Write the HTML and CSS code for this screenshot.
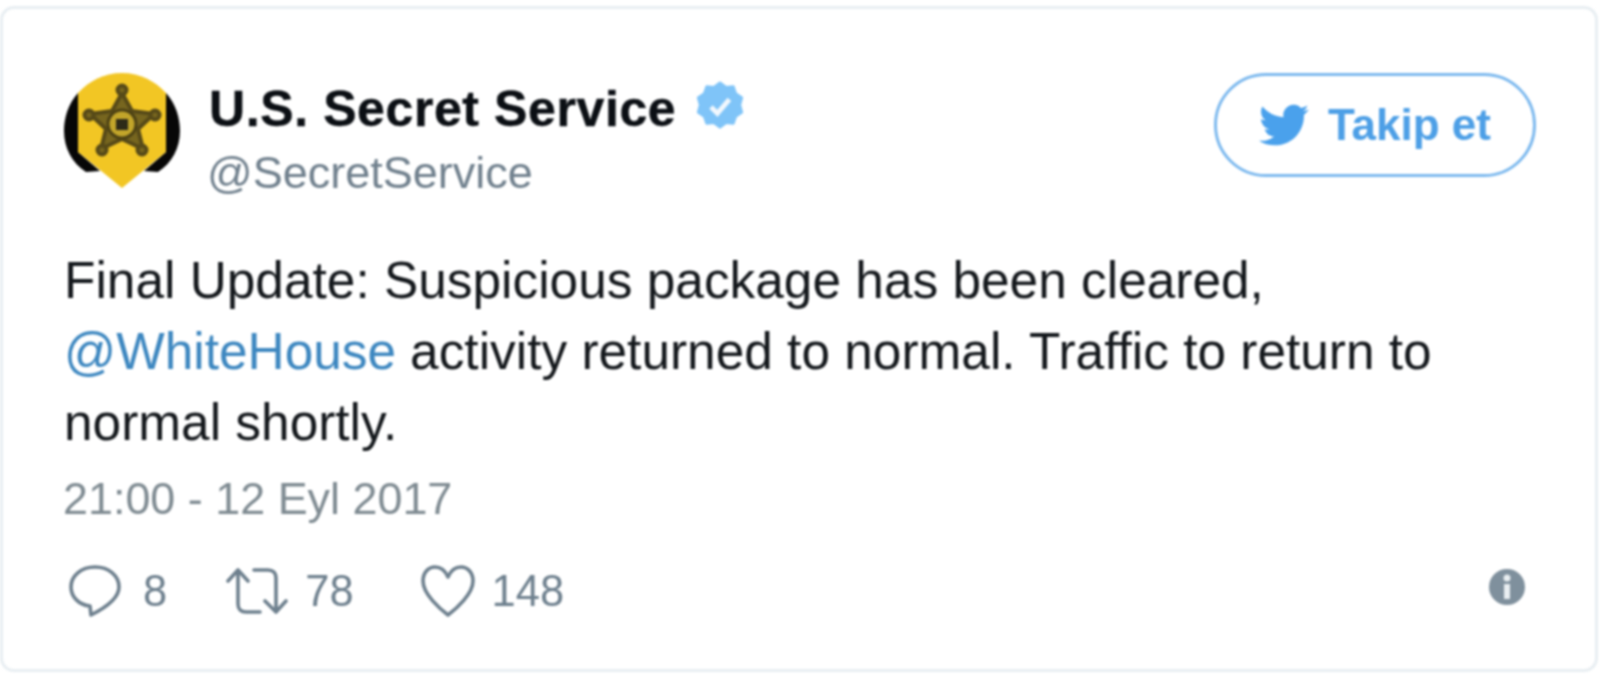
FILE: index.html
```html
<!DOCTYPE html>
<html lang="tr">
<head>
<meta charset="utf-8">
<title>U.S. Secret Service</title>
<link rel="stylesheet" href="styles.css">
</head>
<body>
<article class="card">
  <header class="head">
    <svg class="avatar" viewBox="0 0 116 116" aria-hidden="true">
      <path d="M14 20C4 31 0 45 0 58c0 17 8 32 22 41l14-1L14 79Z" fill="#070707"/>
      <path d="M102 20c10 11 14 25 14 38 0 17-8 32-22 41l-14-1 22-19Z" fill="#070707"/>
      <path d="M58 0C40 0 25 8 14 20V79L58 115L102 79V20C91 8 76 0 58 0Z" fill="#f2c624"/>
      <g fill="#77661f" stroke="#574a18" stroke-width="4" stroke-linejoin="round">
        <path d="M58 20L68 38L90 41L74 56L79 76L58 66L37 76L42 56L26 41L48 38Z"/>
        <circle cx="58" cy="17" r="4.500"/><circle cx="91" cy="42" r="4.500"/><circle cx="78" cy="77" r="4.500"/><circle cx="38" cy="77" r="4.500"/><circle cx="25" cy="42" r="4.500"/>
      </g>
      <circle cx="58" cy="51" r="14" fill="#c2a52a" stroke="#4d4214" stroke-width="3"/>
      <rect x="52" y="46" width="12" height="11" fill="#2e2a18"/>
    </svg>
    <div class="who">
      <div class="name-row">
        <span class="name">U.S. Secret Service</span>
        <svg class="badge" viewBox="-1 -1 26 26" aria-hidden="true">
          <path fill="#7fc4f8" stroke="#7fc4f8" stroke-width="1.500" stroke-linejoin="round" d="M12 .5l3 2.200 3.600-.3 1.200 3.500 3 2-1 3.600 1 3.600-3 2-1.200 3.500-3.600-.3-3 2.200-3-2.200-3.600.3-1.200-3.500-3-2 1-3.600-1-3.600 3-2 1.200-3.500 3.600.3z"/>
          <path fill="none" stroke="#f2f8fd" stroke-width="2.400" d="M7.500 12.500l3.200 3.200 6-7"/>
        </svg>
      </div>
      <div class="handle">@SecretService</div>
    </div>
    <a class="follow">
      <svg class="bird" viewBox="0 0 24 24" aria-hidden="true">
        <path fill="#4aa1ec" d="M23.950 4.570a10 10 0 0 1-2.820.770 4.960 4.960 0 0 0 2.160-2.720c-.950.550-2 .960-3.130 1.190a4.920 4.920 0 0 0-8.380 4.480C7.690 8.100 4.070 6.130 1.640 3.160a4.820 4.820 0 0 0-.660 2.470c0 1.710.870 3.210 2.190 4.100a4.900 4.900 0 0 1-2.230-.620v.060a4.920 4.920 0 0 0 3.950 4.830 5 5 0 0 1-2.210.080 4.940 4.940 0 0 0 4.600 3.420A9.870 9.870 0 0 1 0 19.540a14 14 0 0 0 7.560 2.210c9.050 0 14-7.500 14-13.980 0-.210 0-.420-.020-.630a9.940 9.940 0 0 0 2.410-2.570z"/>
      </svg>
      <span>Takip et</span>
    </a>
  </header>
  <div class="text">
    <div>Final Update: Suspicious package has been cleared,</div>
    <div class="line-mixed"><span class="mention">@WhiteHouse</span><span>activity returned to normal. Traffic to return to</span></div>
    <div>normal shortly.</div>
  </div>
  <time class="time">21:00 - 12 Eyl 2017</time>
  <footer class="actions">
    <span class="action action-reply">
      <svg class="icon" viewBox="0 0 54 54" aria-hidden="true">
        <path fill="none" stroke="#6e808e" stroke-width="3.600" stroke-linejoin="round" d="M27 3C13 3 3 12 3 23c0 10 8 18 19 19l1 9c10-5 28-15 28-28C51 12 41 3 27 3Z"/>
      </svg>
      <span>8</span>
    </span>
    <span class="action">
      <svg class="icon icon-rt" viewBox="0 0 62 50" aria-hidden="true">
        <path fill="none" stroke="#6e808e" stroke-width="3.600" stroke-linecap="round" stroke-linejoin="round" d="M2 15L12 4l10 11M12 5V38c0 5 3 8 8 8H34M28 4H42c5 0 8 3 8 8V45M39 35l11 11 10-11"/>
      </svg>
      <span>78</span>
    </span>
    <span class="action action-like">
      <svg class="icon" viewBox="0 0 54 54" aria-hidden="true">
        <path fill="none" stroke="#6e808e" stroke-width="3.600" stroke-linejoin="round" d="M27 13C24 6 19 3 14 3 7 3 2 9 2 17c0 13 17 28 25 34 8-6 25-21 25-34C52 9 47 3 40 3 35 3 30 6 27 13Z"/>
      </svg>
      <span>148</span>
    </span>
    <svg class="info" viewBox="0 0 36 36" aria-hidden="true">
      <circle cx="18" cy="18" r="18" fill="#7f909d"/>
      <circle cx="18" cy="9" r="3.500" fill="#e9eef1"/>
      <rect x="15" y="15" width="6" height="15" fill="#e9eef1"/>
    </svg>
  </footer>
</article>
</body>
</html>
```
FILE: styles.css
```css
html, body {
  margin: 0;
  height: 685px;
  background: #fff;
  overflow: hidden;
}
body {
  font-family: "Liberation Sans", Arial, sans-serif;
  padding-top: 6px;
  box-sizing: border-box;
}
.card {
  box-sizing: border-box;
  width: 1598px;
  height: 666px;
  border: 3px solid #e8eef2;
  border-radius: 14px;
  padding: 64px 59px 0 61px;
  filter: blur(0.8px);
}
.head {
  display: flex;
  align-items: flex-start;
}
.avatar {
  width: 116px;
  height: 116px;
  flex: none;
}
.who {
  margin-left: 29px;
}
.name-row {
  display: flex;
  align-items: flex-start;
  height: 70px;
}
.name {
  font-size: 50px;
  font-weight: 700;
  line-height: 70px;
  margin-top: 1px;
  letter-spacing: 0.600px;
  color: #0b0f14;
  -webkit-text-stroke: 0.400px #0b0f14;
}
.badge {
  width: 52px;
  height: 52px;
  margin-left: 18px;
  margin-top: 7px;
}
.handle {
  margin-left: -2px;
  font-size: 45px;
  line-height: 60px;
  color: #71818e;
}
.follow {
  margin-left: auto;
  margin-top: 0;
  box-sizing: border-box;
  width: 322px;
  height: 104px;
  border: 3px solid #7db9ee;
  border-radius: 52px;
  display: flex;
  align-items: center;
  justify-content: center;
  gap: 19px;
  font-size: 44px;
  font-weight: 700;
  color: #4d9fe6;
}
.bird {
  width: 50px;
  height: 50px;
}
.text {
  margin: 42px 0 0 0;
  font-size: 51.400px;
  line-height: 71px;
  color: #14181c;
}
.line-mixed {
  display: flex;
  gap: 14px;
}
.mention {
  color: #3d87c0;
}
.time {
  display: block;
  margin: 14px 0 0 -1px;
  font-size: 44.900px;
  line-height: 54px;
  color: #7f8b92;
}
.actions {
  display: flex;
  align-items: center;
  gap: 59px;
  margin: 38px 11px 0 4px;
  font-size: 43.500px;
  color: #6e808e;
}
.action {
  display: flex;
  align-items: center;
  gap: 17px;
}
.action-reply {
  gap: 21px;
}
.action-like {
  margin-left: 8px;
}
.icon {
  width: 54px;
  height: 54px;
}
.icon-rt {
  width: 62px;
  height: 50px;
}
.info {
  width: 36px;
  height: 36px;
  margin-left: auto;
  margin-top: -8px;
}
```
